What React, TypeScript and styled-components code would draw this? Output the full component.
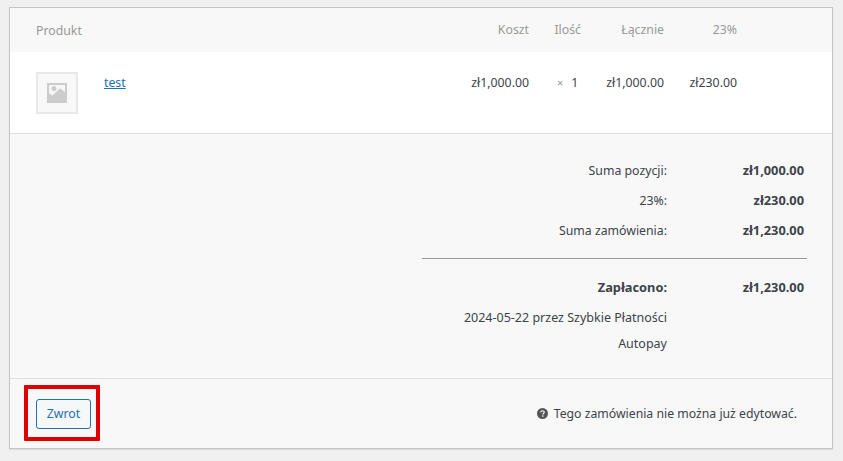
import React from "react";
import styled, { createGlobalStyle } from "styled-components";

const Global = createGlobalStyle`
  html, body { margin: 0; padding: 0; background: #f0f0f1; }
  body { font-family: "Noto Sans", "Open Sans", sans-serif; font-size: 12.3px; color: #3c434a; }
`;
const Page = styled.div`
  width: 843px;
  height: 461px;
  padding: 7px 10px 0 9px;
  box-sizing: border-box;
  overflow: hidden;
  position: relative;
`;
const Panel = styled.div`
  border: 1px solid #c3c4c7;
  box-shadow: 0 1px 1px rgba(0, 0, 0, 0.08);
  background: #f8f8f8;
  height: 442px;
  box-sizing: border-box;
  display: flex;
  flex-direction: column;
`;
const Row = styled.div`
  display: grid;
  grid-template-columns: 68px 1fr 100px 52px 83px 73px;
  padding: 0 95px 0 26px;
`;
const HeadRow = styled(Row)`
  height: 44px;
  align-items: center;
  color: #999;
  background: #f8f8f8;
`;
const ItemRow = styled(Row)`
  background: #fff;
  border-bottom: 1px solid #dfdfdf;
  padding-top: 20px;
  height: 61px;
`;
const HeadName = styled.div`
  grid-column: span 2;
`;
const Right = styled.div`
  text-align: right;
  line-height: 22px;
`;
const Qty = styled.div`
  line-height: 22px;
  padding-left: 28px;
  white-space: nowrap;
`;
const Times = styled.span`
  color: #8f98a3;
  font-size: 11px;
  margin-right: 8px;
`;
const Thumb = styled.div`
  width: 42px;
  height: 42px;
  box-sizing: border-box;
  background: #f8f8f8;
  border: 2px solid #e8e8e8;
  display: flex;
  align-items: center;
  justify-content: center;
`;
const NameLink = styled.a`
  color: #2271b1;
  text-decoration: underline;
  line-height: 22px;
  display: block;
`;
const Totals = styled.div`
  flex: 1;
  display: flex;
  justify-content: flex-end;
  padding: 26px 25px 0 0;
  border-bottom: 1px solid #dfdfdf;
`;
const TotalsBlock = styled.div`
  width: 385px;
`;
const TotalLine = styled.div`
  display: grid;
  grid-template-columns: 245px 137px;
  height: 30px;
  line-height: 22px;
  text-align: right;
`;
const Amount = styled.strong`
  font-weight: 700;
  font-size: 12.8px;
  line-height: 21px;
`;
const Rule = styled.div`
  border-top: 1px solid #999;
  margin: 8px 0 18px;
`;
const NoteLine = styled.div<{ $h: number }>`
  width: 245px;
  text-align: right;
  font-size: 12.5px;
  line-height: 22px;
  height: ${(p) => p.$h}px;
`;
const Footer = styled.div`
  height: 69px;
  flex: none;
  display: flex;
  align-items: center;
  justify-content: space-between;
  padding: 0 35px 0 26px;
`;
const Refund = styled.button`
  width: 55px;
  height: 30px;
  padding: 0;
  border: 1px solid #2271b1;
  border-radius: 3px;
  background: #f6f7f7;
  color: #2271b1;
  font: inherit;
`;
const Notice = styled.div`
  display: flex;
  align-items: center;
  gap: 6px;
  font-size: 12.25px;
`;
const Highlight = styled.div`
  position: absolute;
  left: 24px;
  top: 385px;
  width: 76px;
  height: 56px;
  box-sizing: border-box;
  border: 4px solid #e00000;
  border-radius: 1px;
`;

export default function App() {
  return (
    <Page>
      <Global />
      <Panel>
        <HeadRow>
          <HeadName>Produkt</HeadName>
          <Right>Koszt</Right>
          <Right>Ilość</Right>
          <Right>Łącznie</Right>
          <Right>23%</Right>
        </HeadRow>
        <ItemRow>
          <Thumb>
            <svg width="20" height="20" viewBox="0 0 20 20">
              <rect x="0" y="0" width="20" height="20" fill="#ccc" />
              <rect x="2" y="2" width="16" height="16" fill="#f6f6f6" />
              <circle cx="7" cy="5.5" r="2.5" fill="#ccc" />
              <path d="M2 18v-8l3.5 2.5L13 5.5l5 3.5v9z" fill="#ccc" />
            </svg>
          </Thumb>
          <NameLink href="#">test</NameLink>
          <Right>zł1,000.00</Right>
          <Qty><Times>×</Times>1</Qty>
          <Right>zł1,000.00</Right>
          <Right>zł230.00</Right>
        </ItemRow>
        <Totals>
          <TotalsBlock>
            <TotalLine><span>Suma pozycji:</span><Amount>zł1,000.00</Amount></TotalLine>
            <TotalLine><span>23%:</span><Amount>zł230.00</Amount></TotalLine>
            <TotalLine><span>Suma zamówienia:</span><Amount>zł1,230.00</Amount></TotalLine>
            <Rule />
            <TotalLine><Amount>Zapłacono:</Amount><Amount>zł1,230.00</Amount></TotalLine>
            <NoteLine $h={26}>2024-05-22 przez Szybkie Płatności</NoteLine>
            <NoteLine $h={22}>Autopay</NoteLine>
          </TotalsBlock>
        </Totals>
        <Footer>
          <Refund>Zwrot</Refund>
          <Notice>
            <svg width="11" height="11" viewBox="0 0 12 12">
              <circle cx="6" cy="6" r="6" fill="#555" />
              <path d="M4.2 4.7C4.2 3.6 5 3 6 3s1.9.6 1.9 1.6c0 1.3-1.5 1.3-1.5 2.4" stroke="#f8f8f8" strokeWidth="1.3" fill="none" />
              <rect x="5.6" y="8" width="1.5" height="1.5" fill="#f8f8f8" />
            </svg>
            <span>Tego zamówienia nie można już edytować.</span>
          </Notice>
        </Footer>
      </Panel>
      <Highlight />
    </Page>
  );
}
